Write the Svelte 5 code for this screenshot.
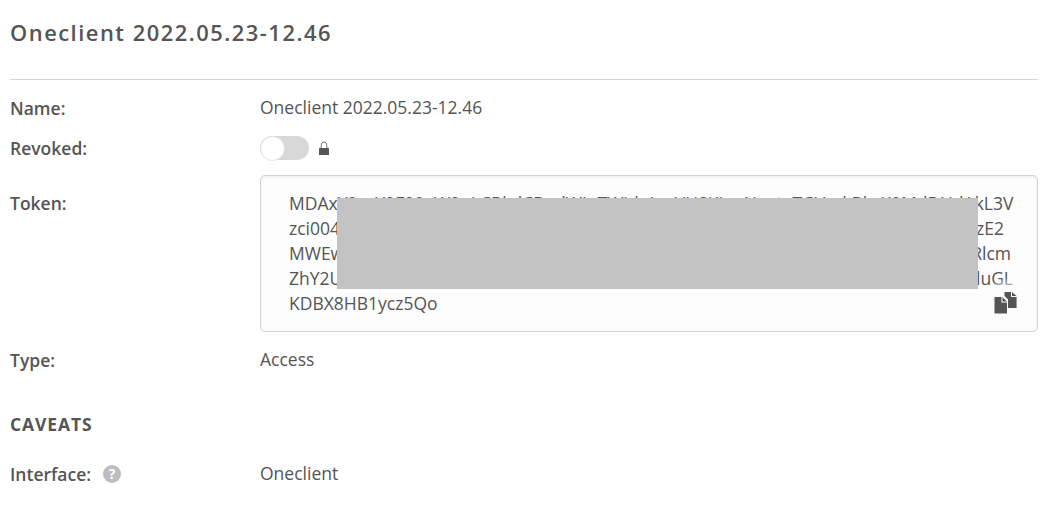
<script>
  const lines = [
    { head: 'MDAxY2xvY2F00aW9uLCBkdCBodWIuTWJduLmVHSKLmNvntaTGVyckBkzK0MdDUd', tail: 'AkL3V', right: 24 },
    { head: 'zci004', tail: 'zE2', right: 33 },
    { head: 'MWEw', tail: 'Rlcm', right: 26 },
    { head: 'ZhY2U', tail: 'luGL', right: 24 },
    { head: 'KDBX8HB1ycz5Qo', tail: '', right: 24 }
  ];
</script>

<main>
  <header><h1>Oneclient 2022.05.23-12.46</h1></header>

  <div class="row name">
    <div class="label">Name:</div>
    <div class="value">Oneclient 2022.05.23-12.46</div>
  </div>

  <div class="row revoked">
    <div class="label">Revoked:</div>
    <div class="value control">
      <span class="toggle"><span class="knob"></span></span>
      <svg class="lock" width="10" height="14" viewBox="0 0 10 14">
        <path d="M2.2 7V4.2a2.8 3.2 0 0 1 5.6 0V7" fill="none" stroke="#777" stroke-width="1" />
        <rect x="0" y="7" width="10" height="7" rx=".5" fill="#555" />
      </svg>
    </div>
  </div>

  <div class="row token">
    <div class="label">Token:</div>
    <div class="box">
      {#each lines as line}
        <div class="line" style="padding-right: {line.right}px">
          <span>{line.head}</span><span>{line.tail}</span>
        </div>
      {/each}
      <div class="mask"></div>
      <div class="copy">
        <svg width="24" height="23" viewBox="0 0 24 23">
          <path d="M10.5 1H17v5h5.6v11H14V8.5L10.5 5z" fill="#555" />
          <path d="M18 1l4.6 4H18z" fill="#555" />
          <path d="M.5 6H7.5v5.5H13V22.5H.5z" fill="#555" />
          <path d="M8.5 6l4.5 4.6H8.5z" fill="#555" />
        </svg>
      </div>
    </div>
  </div>

  <div class="row type">
    <div class="label">Type:</div>
    <div class="value">Access</div>
  </div>

  <h2>CAVEATS</h2>

  <div class="row interface">
    <div class="label">Interface: <span class="help">?</span></div>
    <div class="value">Oneclient</div>
  </div>
</main>

<style>
  :global(body) { background: #fff; }
  main {
    box-sizing: border-box;
    height: 518px;
    padding: 0 9px 0 10px;
    overflow: hidden;
    font: 400 17.5px/25px "Open Sans", sans-serif;
    color: #555;
  }
  header {
    box-sizing: border-box;
    height: 80px;
    padding-top: 17px;
    border-bottom: 1px solid #d4d4d4;
  }
  h1 { margin: 0; font-size: 21.9px; line-height: 32px; font-weight: 600; letter-spacing: 1.5px; }
  .row { display: grid; grid-template-columns: 250px minmax(0, 1fr); align-items: start; }
  .label { font-weight: 600; padding-top: 1px; }
  .name { box-sizing: border-box; height: 55px; padding-top: 15px; }
  .revoked { height: 40px; }
  .control { display: flex; align-items: center; height: 26px; }
  .toggle {
    display: flex;
    align-items: center;
    box-sizing: border-box;
    width: 49px;
    height: 24px;
    border-radius: 12px;
    background: #d8d8d8;
  }
  .knob {
    box-sizing: border-box;
    flex: none;
    width: 25px;
    height: 25px;
    border: 1px solid #e2e2e2;
    border-radius: 50%;
    background: #fff;
  }
  .lock { margin-left: 10px; }
  .token .label { padding-top: 16px; }
  .box {
    position: relative;
    box-sizing: border-box;
    height: 157px;
    padding: 15px 0 0 28px;
    border: 1px solid #d4d4d4;
    border-radius: 5px;
    background: #fdfdfd;
    box-shadow: inset 0 1px 3px rgba(0, 0, 0, .07);
  }
  .line { display: flex; justify-content: space-between; height: 25px; white-space: nowrap; }
  .mask { position: absolute; z-index: 2; left: 76px; top: 22px; width: 641px; height: 91px; background: #c3c3c3; }
  .copy {
    position: absolute;
    z-index: 1;
    right: 7px;
    bottom: 4px;
    display: flex;
    align-items: center;
    justify-content: center;
    width: 48px;
    height: 50px;
    background: radial-gradient(circle, #fdfdfd 30%, rgba(253, 253, 253, 0) 72%);
  }
  .type { height: 80px; padding-top: 15px; box-sizing: border-box; }
  h2 { margin: 0; font-size: 17.5px; line-height: 25px; font-weight: 700; letter-spacing: .9px; }
  .interface { padding-top: 24px; }
  .interface .label { display: flex; align-items: center; }
  .help {
    display: grid;
    place-items: center;
    width: 18px;
    height: 18px;
    margin: -2px 0 0 12px;
    border-radius: 50%;
    background: #bdbdbd;
    color: #fff;
    font-size: 14px;
    line-height: 18px;
    font-weight: 700;
  }
</style>
